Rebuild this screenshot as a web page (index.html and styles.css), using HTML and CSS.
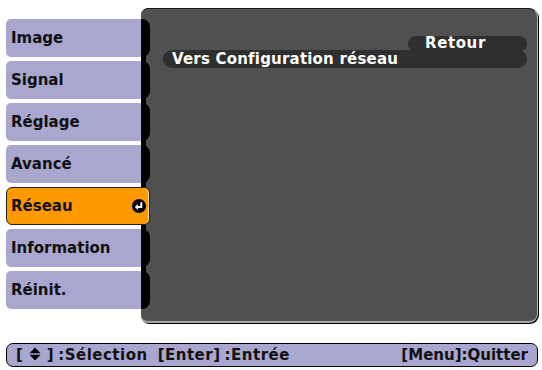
FILE: index.html
```html
<!DOCTYPE html>
<html lang="fr">
    <head>
        <meta charset="UTF-8" />
        <title>Réseau</title>
        <link rel="stylesheet" href="styles.css">
    </head>
    <body>
        <div class="screen">
            <!-- menu tabs on the left -->
            <div class="menu">
                <div class="tab">Image</div>
                <div class="tab">Signal</div>
                <div class="tab">Réglage</div>
                <div class="tab">Avancé</div>
                <div class="tab active">Réseau
                    <span class="enter-icon">
                        <svg width="12" height="12" viewBox="0 0 12 12">
                            <path d="M8.3 2.3 V7 H4.5" fill="none" stroke="#fff" stroke-width="2"/>
                            <path d="M1.8 7 L5 4 V10 Z" fill="#fff"/>
                        </svg>
                    </span>
                </div>
                <div class="tab">Information</div>
                <div class="tab">Réinit.</div>
            </div>

            <!-- sub menu panel -->
            <div class="panel">
                <div class="item back">Retour</div>
                <div class="item">Vers Configuration réseau</div>
            </div>
        </div>

        <div class="help-bar">
            <span class="help-left">
                <span class="key">[ <svg class="updown" width="12" height="14" viewBox="0 0 12 14"><path d="M6 0.5 L11.5 6.3 H0.5 Z M0.5 7.7 H11.5 L6 13.5 Z" fill="#000"/></svg> ]<span class="cmd">:Sélection</span></span>
                <span class="key">[Enter]<span class="cmd">:Entrée</span></span>
            </span>
            <span>[Menu]:Quitter</span>
        </div>
    </body>
</html>
```

FILE: styles.css
```css
body {
    margin: 0;
    background: #fff;
    font-family: "DejaVu Sans", sans-serif;
    font-weight: bold;
    width: 542px;
    height: 370px;
    overflow: hidden;
}
.screen {
    display: flex;
    align-items: flex-start;
    padding: 8px 4px 0 6px;
}
.menu {
    position: relative;
    z-index: 1;
    width: 144px;
    margin-right: -9px;
    margin-top: 11px;
    display: flex;
    flex-direction: column;
    gap: 4px;
}
.menu::before {
    content: "";
    position: absolute;
    z-index: -1;
    right: 4px;
    width: 5px;
    top: 8px;
    bottom: 8px;
    background: #000;
}
.tab {
    height: 38px;
    box-sizing: border-box;
    display: flex;
    align-items: center;
    padding-left: 5px;
    font-size: 15px;
    color: #111;
    background: #a9a6cf;
    border-right: 9px solid #000;
    border-radius: 5px 8px 8px 5px;
}
.tab.active {
    background: #ff9900;
    border: 1px solid #222;
    box-shadow: inset -1px 0 0 #ffe0a0;
    border-radius: 6px;
    padding-left: 4px;
    justify-content: space-between;
    padding-right: 3px;
}
.enter-icon {
    display: flex;
    align-items: center;
    justify-content: center;
    width: 14px;
    height: 14px;
    border-radius: 50%;
    background: #000;
}
.panel {
    flex: 1;
    height: 315px;
    box-sizing: border-box;
    background: #505050;
    border-top: 1px solid #1a1a1a;
    border-right: 1px solid #b5b5b5;
    border-bottom: 2px solid #a5a5a5;
    border-radius: 7px 9px 9px 7px;
    box-shadow: 1px 1px 0 #000;
    padding: 27px 10px 0 22px;
    display: flex;
    flex-direction: column;
    align-items: stretch;
}
.item {
    height: 18px;
    border-radius: 9px;
    background: #2f2f2f;
    color: #fff;
    font-size: 15px;
    line-height: 18px;
    padding-left: 9px;
    letter-spacing: 0.2px;
}
.item.back {
    align-self: flex-end;
    width: 119px;
    box-sizing: border-box;
    padding-left: 17px;
    height: 16px;
    line-height: 14px;
    margin-bottom: -2px;
    letter-spacing: 0.6px;
}
.help-bar {
    margin: 20px 4px 0 6px;
    height: 24px;
    box-sizing: border-box;
    border: 1.5px solid #000;
    border-radius: 7px;
    background: #a9a6cf;
    display: flex;
    justify-content: space-between;
    align-items: center;
    padding: 0 9px 0 9px;
    font-size: 15px;
    color: #111;
}
.help-left {
    display: flex;
    gap: 10px;
}
.key {
    letter-spacing: 0.5px;
}
.cmd {
    margin-left: 4px;
}
.updown {
    vertical-align: -1px;
}
```
